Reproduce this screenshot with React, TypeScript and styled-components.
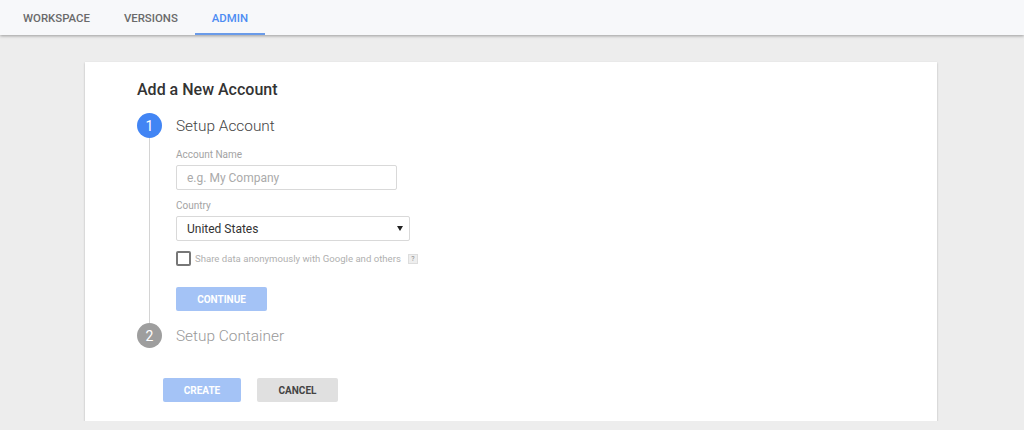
import styled, { createGlobalStyle } from "styled-components";

const GlobalStyle = createGlobalStyle`
    html, body {
        margin: 0;
        padding: 0;
        background: #ededed;
        font-family: Roboto, "Liberation Sans", Arial, sans-serif;
    }
    * { box-sizing: border-box; }
`

const TopBar = styled.header`
    height: 35px;
    background: #f7f8fa;
    box-shadow: 0 1px 3px rgba(0, 0, 0, 0.35);
    display: flex;
    align-items: stretch;
    padding-left: 6px;
    position: relative;
    z-index: 1;
`

const Tab = styled.div<{ $active?: boolean }>`
    display: flex;
    align-items: center;
    padding: 2px 17px 0;
    font-size: 11.4px;
    font-weight: 500;
    color: ${props => props.$active ? "#4d8cf3" : "#6a6a6a"};
    border-bottom: 2px solid ${props => props.$active ? "#6a9be9" : "transparent"};
`

const Card = styled.main`
    width: 852px;
    margin: 27px 0 0 85px;
    background: #fff;
    box-shadow: 0 1px 2px rgba(0, 0, 0, 0.25);
    padding: 18px 51px 19px 52px;
`

const Title = styled.h1`
    margin: 0 0 13px;
    font-size: 16px;
    line-height: 20px;
    font-weight: 500;
    color: #333;
`

const StepHeader = styled.div`
    display: flex;
    align-items: center;
    gap: 14px;
`

const Circle = styled.div<{ $color: string }>`
    width: 25px;
    height: 25px;
    border-radius: 50%;
    background: ${props => props.$color};
    color: #fff;
    font-size: 14px;
    display: flex;
    align-items: center;
    justify-content: center;
`

const StepTitle = styled.div<{ $muted?: boolean }>`
    font-size: 15.4px;
    font-weight: 300;
    color: ${props => props.$muted ? "#999" : "#444"};
`

const StepBody = styled.div`
    margin-left: 12px;
    border-left: 1px solid #d4d4d4;
    padding: 11px 0 12px 26px;
    display: flex;
    flex-direction: column;
    align-items: flex-start;
`

const Label = styled.label`
    font-size: 10px;
    line-height: 12px;
    color: #a3a3a3;
    margin-bottom: 4px;
`

const TextInput = styled.div<{ $width: number }>`
    width: ${props => props.$width}px;
    height: 25px;
    border: 1px solid #d9d9d9;
    border-radius: 2px;
    padding: 0 10px;
    display: flex;
    align-items: center;
    justify-content: space-between;
    font-size: 12px;
    margin-bottom: 10px;
`

const Placeholder = styled.span`
    color: #aaa;
`

const Value = styled.span`
    color: #333;
`

const Caret = styled.span`
    width: 0;
    height: 0;
    border-left: 3px solid transparent;
    border-right: 3px solid transparent;
    border-top: 5px solid #222;
    margin-right: -4px;
`

const CheckRow = styled.div`
    display: flex;
    align-items: center;
    gap: 4px;
    font-size: 9.6px;
    color: #b0b0b0;
`

const Box = styled.span`
    width: 15px;
    height: 15px;
    border: 2px solid #777;
    border-radius: 2px;
`

const Help = styled.span`
    width: 10px;
    height: 10px;
    background: #eee;
    border: 1px solid #ddd;
    font-size: 7px;
    color: #888;
    display: flex;
    align-items: center;
    justify-content: center;
    margin-left: 3px;
`

const Button = styled.button<{ $kind: "primary" | "plain"; $width: number }>`
    width: ${props => props.$width}px;
    height: 24px;
    border: none;
    border-radius: 2px;
    font-family: inherit;
    font-size: 10px;
    font-weight: 700;
    text-transform: uppercase;
    color: ${props => props.$kind === "primary" ? "#fff" : "#444"};
    background: ${props => props.$kind === "primary" ? "#a4c3f6" : "#e0e0e0"};
`

const ContinueWrap = styled.div`
    margin-top: 21px;
`

const Actions = styled.div`
    display: flex;
    gap: 16px;
    margin: 30px 0 0 26px;
`

function App() {
    return (
        <>
            <GlobalStyle />
            <TopBar>
                <Tab>WORKSPACE</Tab>
                <Tab>VERSIONS</Tab>
                <Tab $active>ADMIN</Tab>
            </TopBar>
            <Card>
                <Title>Add a New Account</Title>
                <StepHeader>
                    <Circle $color="#4285f4">1</Circle>
                    <StepTitle>Setup Account</StepTitle>
                </StepHeader>
                <StepBody>
                    <Label>Account Name</Label>
                    <TextInput $width={221}>
                        <Placeholder>e.g. My Company</Placeholder>
                    </TextInput>
                    <Label>Country</Label>
                    <TextInput $width={234}>
                        <Value>United States</Value>
                        <Caret />
                    </TextInput>
                    <CheckRow>
                        <Box />
                        Share data anonymously with Google and others
                        <Help>?</Help>
                    </CheckRow>
                    <ContinueWrap>
                        <Button $kind="primary" $width={91}>Continue</Button>
                    </ContinueWrap>
                </StepBody>
                <StepHeader>
                    <Circle $color="#9e9e9e">2</Circle>
                    <StepTitle $muted>Setup Container</StepTitle>
                </StepHeader>
                <Actions>
                    <Button $kind="primary" $width={78}>Create</Button>
                    <Button $kind="plain" $width={81}>Cancel</Button>
                </Actions>
            </Card>
        </>
    )
}

export default App;
